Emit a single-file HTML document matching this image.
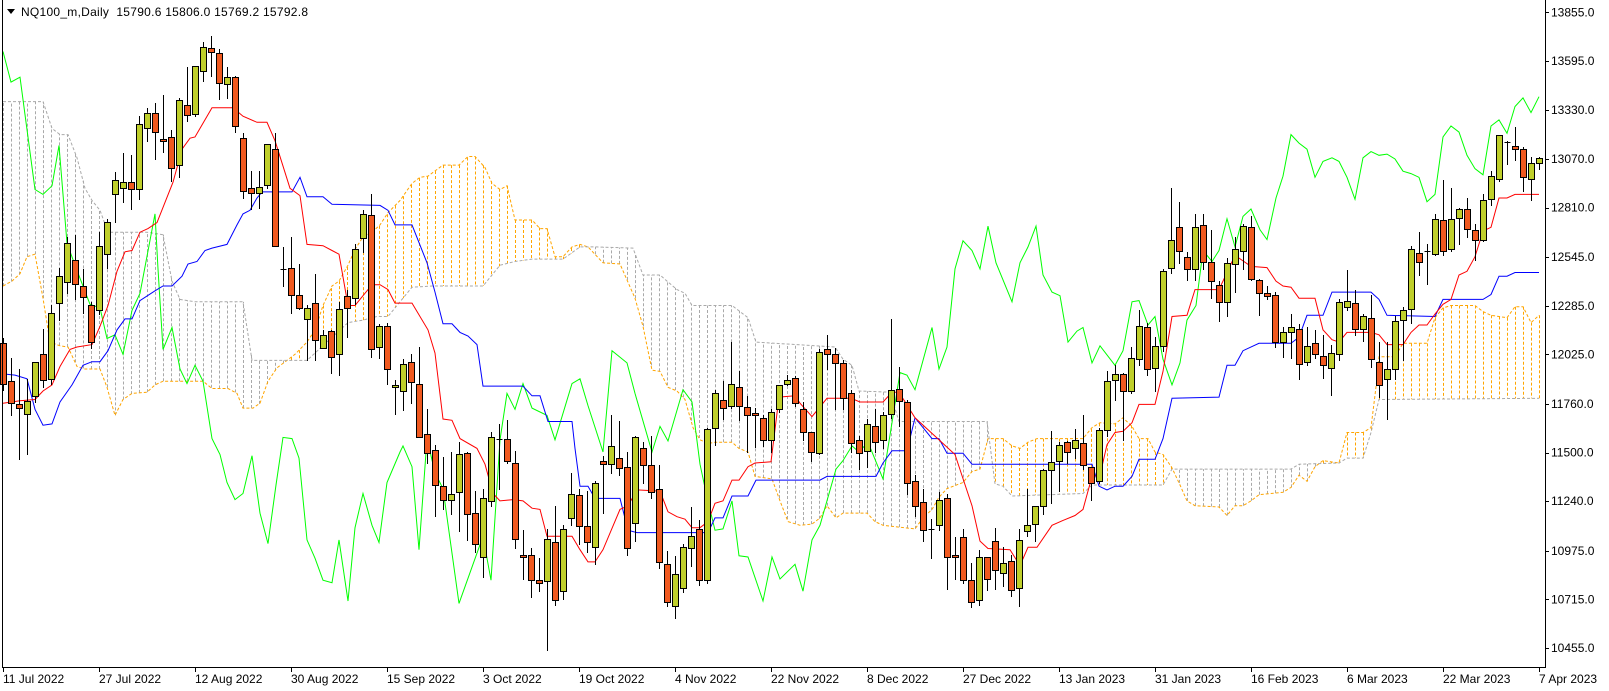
<!DOCTYPE html>
<html><head><meta charset="utf-8"><style>
html,body{margin:0;padding:0;background:#fff;width:1609px;height:691px;overflow:hidden}
svg{display:block}
text{font-family:"Liberation Sans",sans-serif;font-size:12px;fill:#000}
</style></head><body>
<svg id="s" width="1609" height="691" viewBox="0 0 1609 691" xmlns="http://www.w3.org/2000/svg">
<rect width="1609" height="691" fill="#fff"/>
<g id="cloud"></g>
<g id="lines"></g>
<g id="candles"></g>
<g shape-rendering="crispEdges" stroke="#000" stroke-width="1">
<line x1="2.5" y1="0" x2="2.5" y2="667.5"/>
<line x1="1545.5" y1="0" x2="1545.5" y2="667.5"/>
<line x1="2" y1="667.5" x2="1546" y2="667.5"/>
</g>
<g id="ticks" shape-rendering="crispEdges" stroke="#000"></g>
<path d="M7 9 L15 9 L11 14 Z" fill="#000"/>
<text x="21" y="16" xml:space="preserve" textLength="287" lengthAdjust="spacing">NQ100_m,Daily  15790.6 15806.0 15769.2 15792.8</text>
<g id="plabels">
<text x="1551" y="16.5">13855.0</text>
<text x="1551" y="65">13595.0</text>
<text x="1551" y="114">13330.0</text>
<text x="1551" y="163">13070.0</text>
<text x="1551" y="211.5">12810.0</text>
<text x="1551" y="261">12545.0</text>
<text x="1551" y="310">12285.0</text>
<text x="1551" y="358.5">12025.0</text>
<text x="1551" y="408">11760.0</text>
<text x="1551" y="456.5">11500.0</text>
<text x="1551" y="505">11240.0</text>
<text x="1551" y="555">10975.0</text>
<text x="1551" y="603.5">10715.0</text>
<text x="1551" y="652">10455.0</text>
</g>
<g>
<text x="3" y="683">11 Jul 2022</text>
<text x="99" y="683">27 Jul 2022</text>
<text x="195" y="683">12 Aug 2022</text>
<text x="291" y="683">30 Aug 2022</text>
<text x="387" y="683">15 Sep 2022</text>
<text x="483" y="683">3 Oct 2022</text>
<text x="579" y="683">19 Oct 2022</text>
<text x="675" y="683">4 Nov 2022</text>
<text x="771" y="683">22 Nov 2022</text>
<text x="867" y="683">8 Dec 2022</text>
<text x="963" y="683">27 Dec 2022</text>
<text x="1059" y="683">13 Jan 2023</text>
<text x="1155" y="683">31 Jan 2023</text>
<text x="1251" y="683">16 Feb 2023</text>
<text x="1347" y="683">6 Mar 2023</text>
<text x="1443" y="683">22 Mar 2023</text>
<text x="1539" y="683">7 Apr 2023</text>
</g>
</svg>
<script>
var NS="http://www.w3.org/2000/svg";
function T(y){return 21+(y-20)*1.221;}
function el(p,n,a){var e=document.createElementNS(NS,n);for(var k in a)e.setAttribute(k,a[k]);p.appendChild(e);return e;}
var G=[3,45,11,70,20,66,35,158,43,162,52,155,59,122,67,202,75,220,90,252,100,255,107,280,115,277,123,293,132,257,140,243,155,178,158,223,163,289,172,271,180,305,187,317,195,302,203,315,212,362,220,375,227,398,235,412,243,407,252,376,260,423,268,448,276,400,283,361,292,362,299,378,307,445,315,460,323,478,332,480,339,445,348,495,355,435,363,407,372,433,379,447,387,398,400,373,403,368,412,385,419,453,427,362,435,390,443,403,459,497,483,442,491,478,500,363,507,325,515,338,523,317,532,337,547,343,555,363,572,317,580,313,588,335,603,373,612,290,627,300,635,325,652,373,660,352,668,364,683,322,692,332,700,383,707,410,715,437,723,436,732,413,739,458,748,459,763,495,772,459,780,477,795,465,803,487,812,445,820,433,836,387,843,380,852,368,859,373,868,365,883,395,900,308,907,310,915,322,932,271,939,305,947,287,955,223,963,200,972,208,980,223,988,188,996,218,1012,250,1020,218,1028,205,1036,188,1043,228,1052,242,1060,245,1068,283,1077,274,1083,271,1092,300,1100,286,1115,302,1123,290,1132,250,1139,249,1148,269,1155,262,1163,297,1172,318,1180,300,1187,265,1196,253,1203,208,1212,217,1219,208,1227,182,1235,205,1243,180,1251,174,1260,191,1267,199,1276,165,1283,147,1291,113,1299,120,1307,125,1315,148,1323,135,1332,132,1339,135,1347,148,1355,166,1363,132,1371,127,1379,130,1387,129,1395,133,1403,143,1411,145,1419,148,1427,168,1435,162,1443,115,1451,106,1459,111,1467,130,1475,141,1483,146,1491,106,1499,101,1507,112,1515,90,1523,83,1531,95,1539,82];
var R=[3,333,20,331,35,330,43,323,52,318,60,303,70,289,77,287,92,285,100,270,108,253,117,225,125,209,132,208,140,193,148,190,157,185,173,152,182,125,190,116,195,115,212,91,233,91,243,98,257,103,267,103,275,118,290,157,300,163,307,203,323,204,332,208,339,211,348,253,355,253,372,236,380,236,388,240,395,251,412,251,428,273,435,292,443,346,452,347,460,362,477,370,485,383,493,407,500,413,513,412,523,413,532,419,540,420,547,442,572,442,580,453,588,463,595,463,603,453,620,420,628,417,637,404,660,405,668,422,677,426,685,428,692,435,700,435,708,430,715,415,723,413,732,396,739,396,748,385,755,382,771,381,779,328,795,327,800,333,812,344,827,329,851,329,860,332,883,332,892,324,899,324,915,345,955,375,972,417,980,446,988,452,1010,453,1020,466,1028,451,1037,451,1052,433,1063,429,1075,425,1083,420,1092,393,1100,392,1107,367,1115,357,1123,356,1132,349,1139,334,1155,334,1163,307,1172,262,1187,261,1195,240,1219,240,1235,212,1251,221,1267,222,1276,233,1283,237,1291,238,1299,247,1315,247,1323,273,1332,281,1339,283,1347,275,1371,275,1379,277,1387,285,1403,285,1411,275,1419,269,1427,269,1435,260,1443,252,1451,248,1459,228,1467,225,1475,213,1483,192,1491,189,1499,165,1507,165,1515,162,1539,162];
var B=[3,309,15,310,27,313,35,338,43,351,52,350,60,332,72,318,83,302,92,299,100,299,108,290,117,273,125,264,132,264,140,249,155,241,163,237,172,237,182,229,188,219,197,217,205,208,212,206,227,203,237,187,243,178,250,175,257,165,262,160,292,160,300,148,307,164,323,164,332,170,380,171,388,175,395,187,412,187,427,218,435,242,443,268,452,268,460,275,468,278,477,285,483,319,523,319,532,327,540,327,548,348,572,348,575,370,580,401,588,401,595,411,620,411,628,437,637,439,708,439,715,427,723,427,732,409,748,409,756,396,820,396,827,393,876,393,883,382,892,372,907,372,915,345,923,353,932,362,939,362,947,374,963,374,972,383,1092,383,1099,401,1107,404,1115,401,1123,401,1132,393,1139,379,1155,379,1163,362,1172,329,1219,328,1227,302,1235,302,1243,290,1259,284,1291,284,1299,279,1307,261,1323,261,1332,242,1371,242,1379,248,1387,261,1435,262,1443,248,1483,248,1491,244,1499,229,1507,229,1515,226,1539,226];
var A=[3,237,12,233,20,227,27,213,35,211,43,247,50,283,60,286,68,287,77,303,85,305,100,305,107,320,115,343,123,330,132,325,147,324,155,318,163,315,203,315,212,321,228,321,237,325,243,337,253,337,260,333,268,315,277,304,287,298,295,293,307,283,315,273,323,253,332,237,339,233,348,220,355,207,363,197,372,193,380,187,388,177,400,167,412,153,420,148,428,147,443,138,459,138,468,131,475,131,485,140,492,153,500,158,507,155,515,183,532,183,540,190,547,190,555,213,563,213,572,205,580,203,588,205,603,218,620,219,635,247,643,270,652,306,660,307,668,320,677,323,685,330,693,353,700,363,708,366,715,365,732,365,739,370,748,373,755,393,772,395,780,413,788,430,800,433,812,432,820,427,827,417,836,427,843,423,867,423,875,430,883,433,915,436,923,427,932,420,939,410,947,403,963,398,972,389,980,387,988,362,1003,362,1012,368,1020,370,1028,365,1037,362,1083,362,1092,353,1100,349,1115,350,1123,345,1132,352,1139,362,1148,362,1155,373,1163,375,1172,386,1180,400,1187,413,1195,417,1219,418,1227,425,1235,417,1243,417,1251,413,1259,408,1283,406,1291,402,1299,392,1307,397,1315,385,1323,380,1339,382,1347,357,1363,357,1371,353,1377,313,1379,295,1395,295,1403,284,1427,284,1435,263,1443,255,1451,253,1475,253,1483,258,1491,261,1507,263,1515,254,1523,254,1531,267,1539,261];
var S=[3,86,43,86,52,108,60,113,68,113,77,132,85,157,92,167,100,175,108,193,147,193,163,195,172,233,180,248,195,250,243,250,252,298,307,298,348,267,363,265,377,262,388,262,400,250,412,238,433,237,483,237,492,228,500,220,515,217,532,215,563,215,580,205,595,205,633,206,643,228,660,228,667,233,677,240,685,243,692,253,732,253,748,263,756,283,835,287,843,297,852,302,859,323,890,324,899,348,987,348,995,399,1003,401,1012,409,1083,407,1092,400,1163,400,1172,387,1291,387,1299,383,1339,382,1347,378,1363,378,1371,357,1379,330,1539,329];
function pts(a){var s=[];for(var i=0;i<a.length;i+=2)s.push(a[i]+","+T(a[i+1]).toFixed(1));return s.join(" ");}
function interp(a,x){for(var i=0;i<a.length-2;i+=2){if(x>=a[i]&&x<=a[i+2]){var t=(a[i+2]==a[i])?0:(x-a[i])/(a[i+2]-a[i]);return a[i+1]+t*(a[i+3]-a[i+1]);}}return null;}
var cl=document.getElementById("cloud");
for(var k=0;k<=192;k++){var x=3+8*k;var ya=interp(A,x),yb=interp(S,x);if(ya==null||yb==null)continue;
el(cl,"line",{x1:x+0.5,x2:x+0.5,y1:T(ya),y2:T(yb),stroke:(ya<yb?"#ffa500":"#a9a9a9"),"stroke-width":1,"stroke-dasharray":"3,2"});}
el(cl,"polyline",{points:pts(A),fill:"none",stroke:"#ffa500","stroke-width":1,"stroke-dasharray":"3,2"});
el(cl,"polyline",{points:pts(S),fill:"none",stroke:"#a9a9a9","stroke-width":1,"stroke-dasharray":"3,2"});
var ln=document.getElementById("lines");
el(ln,"polyline",{points:pts(G),fill:"none",stroke:"#00ff00","stroke-width":1});
el(ln,"polyline",{points:pts(B),fill:"none",stroke:"#0000ff","stroke-width":1});
el(ln,"polyline",{points:pts(R),fill:"none",stroke:"#ff0000","stroke-width":1});
var C=[[284,317,280,322,0],[315,333,296,343,0],[334,337,305,379,0],[331,342,313,375,1],[299,327,299,332,1],[293,314,272,320,0],[259,313,253,317,1],[229,251,222,265,1],[202,234,197,243,1],[216,235,195,248,0],[237,246,223,259,0],[253,283,250,288,0],[204,257,193,260,1],[185,211,182,222,1],[150,162,144,185,1],[152,157,128,168,1],[152,158,130,174,0],[104,158,98,166,1],[95,108,91,118,1],[95,111,87,133,0],[117,118,81,127,0],[115,140,109,151,0],[85,138,83,148,1],[89,97,58,102,0],[57,96,57,98,1],[41,61,37,69,1],[42,45,32,65,0],[46,71,43,84,0],[66,72,58,83,1],[66,106,65,111,0],[116,159,112,165,0],[157,161,143,174,0],[156,161,143,173,1],[121,154,121,157,1],[125,204,112,204,0],[223,223,205,237,0],[222,244,197,259,0],[244,255,219,256,0],[255,264,253,298,1],[251,281,227,298,0],[277,288,273,288,1],[274,295,273,308,0],[256,293,250,310,1],[245,255,240,279,0],[207,247,203,252,1],[178,198,175,209,1],[179,289,162,295,0],[270,287,268,296,1],[270,305,267,317,0],[318,320,314,342,1],
[301,323,297,339,1],[299,316,293,333,0],[317,361,287,361,0],[358,374,338,382,0],[371,400,367,425,0],[401,412,377,420,0],[407,412,373,424,1],[375,406,365,438,1],[374,424,373,445,0],[423,448,405,455,0],[411,459,403,475,1],[361,413,357,417,1],[362,363,350,403,1],[362,380,347,382,0],[382,444,372,452,0],[457,459,437,477,0],[457,478,452,492,0],[478,480,460,487,0],[444,479,436,535,1],[447,494,417,498,0],[436,487,433,493,1],[407,427,390,433,1],[408,434,403,448,0],[434,447,405,455,0],[398,451,397,465,1],[380,383,376,423,0],[368,383,343,390,1],[378,386,348,392,0],[385,452,373,457,0],[361,431,360,446,1],[370,384,365,398,0],[384,406,360,411,0],[403,463,384,468,0],[465,496,454,499,0],[473,499,458,509,1],[451,484,448,488,1],[442,452,418,466,1],[436,478,429,482,0],[354,478,353,480,1],[325,353,322,367,1],[330,337,315,346,0],[317,335,283,337,1],[320,335,307,347,0],[336,343,327,373,0],[341,343,337,369,0],[345,363,343,368,0],[340,363,338,373,1],[318,338,318,340,1],[314,317,310,318,1],[312,333,311,335,0],
[338,357,332,363,0],[357,373,357,380,0],[291,374,289,375,1],[289,293,277,305,0],[293,300,288,338,0],[300,329,298,338,0],[325,366,322,373,0],[363,374,360,387,0],[350,372,346,385,1],[352,365,338,373,0],[343,363,340,370,1],[322,342,264,345,1],[321,331,303,352,0],[332,398,330,407,0],[397,417,392,425,0],[414,437,403,446,0],[436,436,428,460,1],[412,433,406,437,1],[411,459,407,485,0],[457,459,443,477,0],[443,478,436,480,0],[478,496,464,500,0],[459,494,453,498,1],[459,477,459,486,0],[446,470,435,485,0],[464,472,451,483,1],[462,486,457,491,0],[445,484,436,499,1],[433,438,403,442,1],[417,432,417,446,1],[388,417,387,424,1],[381,388,356,415,1],[367,380,365,405,1],[365,373,364,382,0],[363,370,354,378,1],[366,384,343,387,0],[385,398,385,412,0],[355,397,353,398,1],[315,355,307,360,1],[309,314,302,330,1],[309,323,308,363,0],[296,323,287,325,1],[270,297,257,302,1],[271,305,267,310,0],[286,304,279,323,1],[225,286,223,290,1],[199,222,157,226,1],[189,208,168,218,0],[213,223,209,232,0],[189,223,178,232,1],
[187,217,178,223,0],[217,233,191,247,0],[236,250,233,266,0],[218,250,214,262,1],[207,219,197,242,1],[188,208,186,223,1],[189,231,180,232,0],[232,243,231,261,0],[243,245,237,248,0],[244,283,242,287,0],[275,283,271,295,1],[271,275,260,296,1],[272,301,268,313,0],[286,299,271,302,1],[284,293,273,296,0],[294,302,277,312,0],[292,304,285,326,1],[250,293,248,298,1],[249,254,224,257,1],[251,272,240,277,0],[262,272,260,282,1],[263,297,244,303,0],[299,318,283,328,0],[305,313,283,346,1],[266,305,262,313,1],[257,265,254,298,1],[207,256,204,267,1],[210,217,193,228,0],[208,208,203,235,1],[182,211,178,212,1],[183,208,150,212,0],[182,207,157,208,1],[174,181,173,203,1],[174,190,165,197,0],[191,199,186,216,0],[167,199,162,200,1],[147,166,143,171,1],[113,149,113,151,1],[119,119,118,137,1],[122,125,107,134,0],[125,148,123,159,0],[136,149,131,167,1],[132,136,131,141,1]];
var cg=document.getElementById("candles");
for(var i=0;i<C.length;i++){var c=C[i],x=3+8*i+0.5;var t=Math.round(T(c[0]))+0.5,b=Math.round(T(c[1]))+0.5,h=Math.round(T(c[2])),l=Math.round(T(c[3]));
el(cg,"line",{x1:x,x2:x,y1:h,y2:l+1,stroke:"#000","stroke-width":1,"shape-rendering":"crispEdges"});
if(b-t<1.5){el(cg,"line",{x1:x-3,x2:x+3,y1:t,y2:t,stroke:"#000","stroke-width":1,"shape-rendering":"crispEdges"});}
else el(cg,"rect",{x:x-3,y:t,width:6,height:b-t,fill:(c[4]?"#bfcf2b":"#f0591f"),stroke:"#000","stroke-width":1,"shape-rendering":"crispEdges"});}
var tk=document.getElementById("ticks");
[12,60.6,110.2,158.8,207.5,257,305.7,354.3,403.9,452.5,501.2,550.7,599.4,648].forEach(function(y){var yy=Math.round(y)+0.5;el(tk,"line",{x1:1545,x2:1549,y1:yy,y2:yy});});
for(var j=0;j<17;j++){var xx=3+96*j+0.5;el(tk,"line",{x1:xx,x2:xx,y1:667,y2:672});}
</script>
</body></html>
